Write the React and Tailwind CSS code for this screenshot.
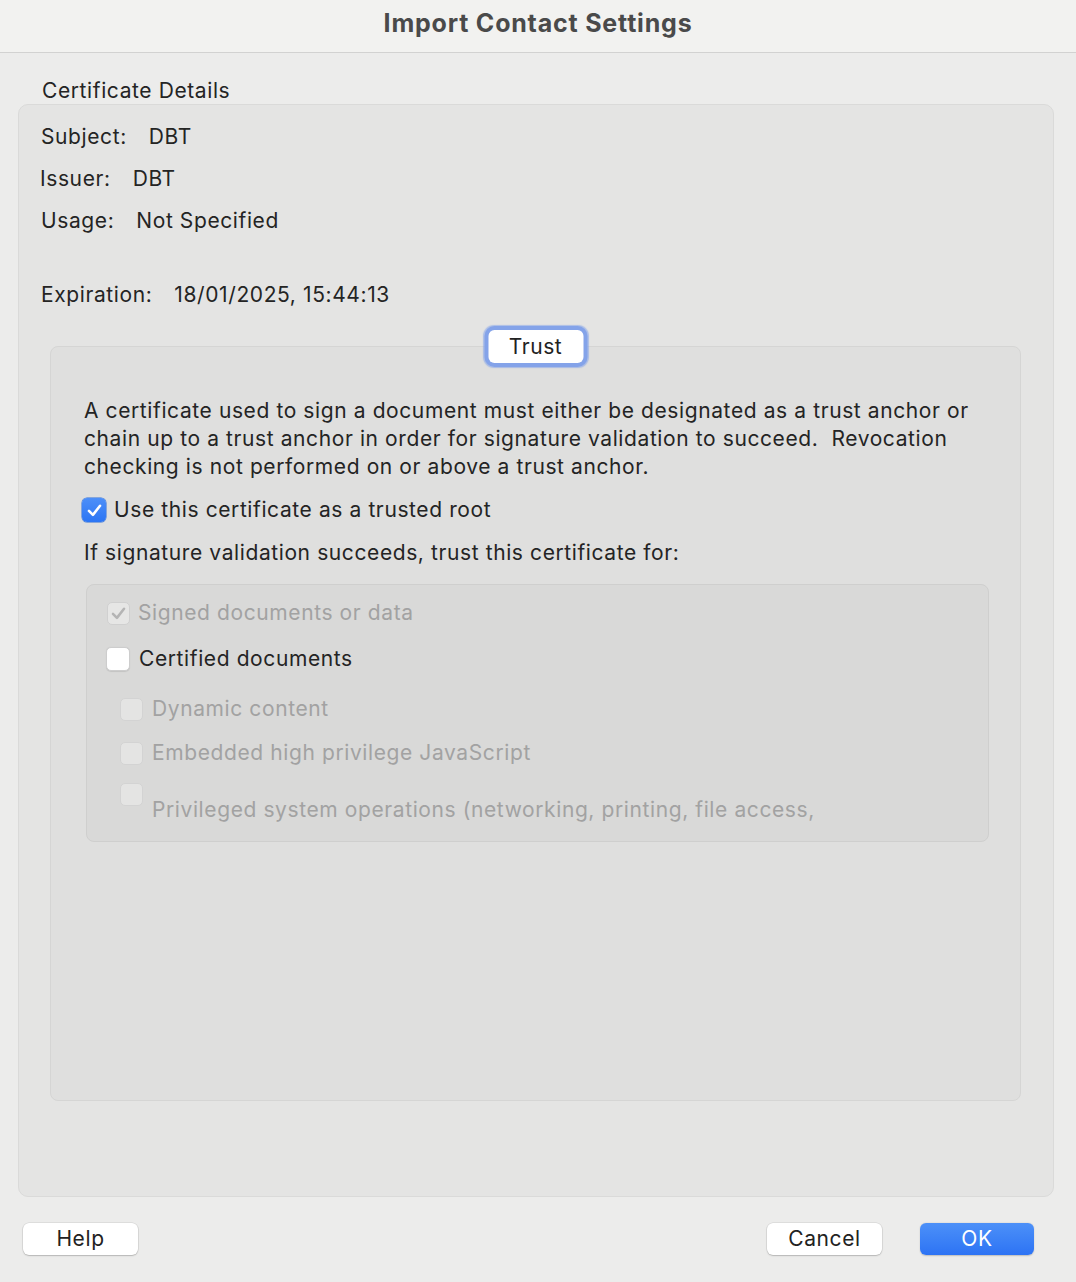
import React from "react";

const font = { fontFamily: "Inter, 'Noto Sans', sans-serif" };

function CheckMark({ color }) {
  return (
    <svg viewBox="0 0 24 24" className="w-[19px] h-[19px]" fill="none">
      <path d="M5 12.5 L10 17.5 L19 6" stroke={color} strokeWidth="3.2" strokeLinecap="round" strokeLinejoin="round" />
    </svg>
  );
}

function Box({ variant }) {
  if (variant === "checked") {
    return (
      <span className="w-[24px] h-[24px] rounded-[5px] bg-gradient-to-b from-[#4d8ff8] to-[#2b75f4] flex items-center justify-center shrink-0 shadow-[0_0_0_0.5px_#2f6fd8]">
        <CheckMark color="#ffffff" />
      </span>
    );
  }
  if (variant === "disabledChecked") {
    return (
      <span className="w-[23px] h-[23px] rounded-[5px] bg-[#e6e6e5] border border-[#d0d0d0] flex items-center justify-center shrink-0">
        <CheckMark color="#b4b4b4" />
      </span>
    );
  }
  if (variant === "unchecked") {
    return <span className="w-[24px] h-[24px] rounded-[5px] bg-white border border-[#cdcdcd] shrink-0 shadow-[0_0.5px_1px_rgba(0,0,0,0.1)]" />;
  }
  return <span className="w-[23px] h-[23px] rounded-[5px] bg-[#e4e4e3] border border-[#d3d3d3] shrink-0" />;
}

export default function App() {
  return (
    <div className="w-[1076px] h-[1282px] bg-[#ececeb] text-[#242424] text-[21px] tracking-[0.6px] flex flex-col" style={font}>
      <div className="h-[53px] shrink-0 bg-[#f2f2f0] border-b border-[#d2d2d1] flex items-center justify-center pb-[4px]">
        <span className="text-[25px] font-bold text-[#4a4a4a] tracking-[0.8px]">Import Contact Settings</span>
      </div>

      <div className="pl-[42px] mt-[24px] h-[27px] leading-[27px]">Certificate Details</div>

      <div className="ml-[18px] w-[1036px] h-[1093px] rounded-[10px] bg-[#e4e4e3] border border-[#dadad9] flex flex-col">
        <div className="pt-[11px] pl-[22px]">
          <div className="h-[42px] flex items-center">
            <span>Subject:</span>
            <span className="ml-[22px]">DBT</span>
          </div>
          <div className="h-[42px] flex items-center">
            <span className="-ml-[1px]">Issuer:</span>
            <span className="ml-[22px]">DBT</span>
          </div>
          <div className="h-[42px] flex items-center">
            <span>Usage:</span>
            <span className="ml-[22px]">Not Specified</span>
          </div>
          <div className="h-[42px] flex items-center mt-[32px]">
            <span>Expiration:</span>
            <span className="ml-[22px]">18/01/2025, 15:44:13</span>
          </div>
        </div>

        <div className="relative ml-[31px] mr-[32px] mt-[30px] h-[755px] rounded-[8px] bg-[#dfdfde] border border-[#d5d5d4] flex flex-col pl-[33px]">
          <div className="absolute left-1/2 -translate-x-1/2 -top-[21px] rounded-[10px] bg-[#84a3e9] p-[4px] shadow-[0_0_1px_1px_rgba(132,163,233,0.6)]">
            <div className="w-[95px] h-[33px] rounded-[6px] bg-white flex items-center justify-center text-[21px] text-[#222]">Trust</div>
          </div>

          <p className="mt-[50px] leading-[28px]">
            A certificate used to sign a document must either be designated as a trust anchor or
            <br />
            chain up to a trust anchor in order for signature validation to succeed.&nbsp; Revocation
            <br />
            checking is not performed on or above a trust anchor.
          </p>

          <div className="mt-[15px] h-[28px] flex items-center -ml-[2px]">
            <Box variant="checked" />
            <span className="ml-[8px]">Use this certificate as a trusted root</span>
          </div>

          <div className="mt-[15px] h-[28px] leading-[28px]">If signature validation succeeds, trust this certificate for:</div>

          <div className="mt-[17px] ml-[2px] mr-[31px] h-[258px] rounded-[8px] bg-[#d9d9d8] border border-[#cfcfce] flex flex-col pl-[20px]">
            <div className="mt-[14px] h-[28px] flex items-center">
              <Box variant="disabledChecked" />
              <span className="ml-[8px] text-[#a2a2a2]">Signed documents or data</span>
            </div>
            <div className="mt-[18px] h-[28px] flex items-center -ml-[1px]">
              <Box variant="unchecked" />
              <span className="ml-[9px]">Certified documents</span>
            </div>
            <div className="mt-[22px] h-[28px] flex items-center ml-[13px]">
              <Box variant="disabled" />
              <span className="ml-[9px] text-[#a2a2a2]">Dynamic content</span>
            </div>
            <div className="mt-[16px] h-[28px] flex items-center ml-[13px]">
              <Box variant="disabled" />
              <span className="ml-[9px] text-[#a2a2a2]">Embedded high privilege JavaScript</span>
            </div>
            <div className="mt-[16px] flex items-start ml-[13px]">
              <Box variant="disabled" />
              <span className="ml-[9px] mt-[13px] text-[#a2a2a2] leading-[28px]">Privileged system operations (networking, printing, file access,</span>
            </div>
          </div>
        </div>
      </div>

      <div className="mt-[26px] flex items-center pl-[23px]">
        <button className="w-[115px] h-[32px] rounded-[6px] bg-white shadow-[0_0_0_0.5px_rgba(0,0,0,0.12),0_1px_1.5px_rgba(0,0,0,0.18)] text-[21px] text-[#222] flex items-center justify-center">Help</button>
        <button className="ml-auto w-[115px] h-[32px] rounded-[6px] bg-white shadow-[0_0_0_0.5px_rgba(0,0,0,0.12),0_1px_1.5px_rgba(0,0,0,0.18)] text-[21px] text-[#222] flex items-center justify-center">Cancel</button>
        <button className="ml-[38px] mr-[42px] w-[114px] h-[32px] rounded-[6px] bg-gradient-to-b from-[#4c90f8] to-[#2d73f4] shadow-[0_0.5px_1.5px_rgba(0,0,0,0.2)] text-[21px] text-white flex items-center justify-center">OK</button>
      </div>
    </div>
  );
}
